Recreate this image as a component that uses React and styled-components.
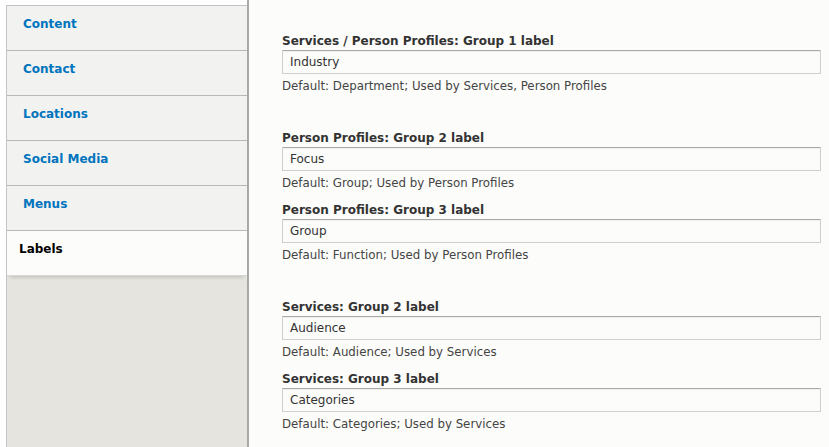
import React from "react";
import styled, { createGlobalStyle } from "styled-components";

const GlobalStyle = createGlobalStyle`
    html, body {
        margin: 0;
        padding: 0;
        background: #ffffff;
    }
    body {
        font-family: "DejaVu Sans", "Liberation Sans", sans-serif;
        font-size: 13px;
        color: #333;
    }
`;

const Layout = styled.div`
    display: flex;
    min-height: 447px;
    width: 829px;
    overflow: hidden;
`;

const Sidebar = styled.div`
    width: 241px;
    padding: 5px 0 0 6px;
    display: flex;
    flex-direction: column;
`;

const TabList = styled.ul`
    flex: 1;
    margin: 0;
    padding: 0;
    list-style: none;
    background: #e6e4df;
    border-top: 1px solid #c4c4c4;
    border-left: 1px solid #c4c4c4;
`;

const Tab = styled.li`
    height: 45px;
    box-sizing: border-box;
    padding: ${({ selected }) => (selected ? "10px 16px 0 12px" : "10px 16px 0 16px")};
    background: ${({ selected }) => (selected ? "#fcfcfa" : "#f2f2f0")};
    border-bottom: 1px solid ${({ selected }) => (selected ? "#d8d8d4" : "#b8b8b8")};
    box-shadow: ${({ selected }) => (selected ? "0 4px 4px -3px rgba(0, 0, 0, 0.18)" : "none")};
    position: relative;
    font-weight: bold;
    font-size: 12px;
    line-height: 16px;
    color: ${({ selected }) => (selected ? "#000" : "#0074bd")};
`;

const Panel = styled.div`
    flex: 1;
    background: #fcfcfa;
    border-left: 2px solid #a8a8a8;
    padding: 32px 8px 0 33px;
`;

const Group = styled.div`
    padding-bottom: 25px;
`;

const Item = styled.div`
    margin-bottom: 9px;
`;

const Label = styled.label`
    display: block;
    font-weight: bold;
    font-size: 12px;
    line-height: 18px;
    color: #333;
`;

const Input = styled.input`
    display: block;
    width: 100%;
    height: 24px;
    box-sizing: border-box;
    margin: 0;
    padding: 0 7px;
    font-family: inherit;
    font-size: 12px;
    color: #333;
    background: #fcfcfa;
    border: 1px solid #cfcfcf;
    border-top-color: #aaaaaa;
    border-radius: 1px;
    box-shadow: inset 0 1px 1px rgba(0, 0, 0, 0.06);
`;

const Description = styled.div`
    margin-top: 4px;
    font-size: 11.8px;
    line-height: 17px;
    color: #444;
`;

const tabs = ["Content", "Contact", "Locations", "Social Media", "Menus", "Labels"];

const groups = [
    [
        {
            label: "Services / Person Profiles: Group 1 label",
            value: "Industry",
            help: "Default: Department; Used by Services, Person Profiles",
        },
    ],
    [
        {
            label: "Person Profiles: Group 2 label",
            value: "Focus",
            help: "Default: Group; Used by Person Profiles",
        },
        {
            label: "Person Profiles: Group 3 label",
            value: "Group",
            help: "Default: Function; Used by Person Profiles",
        },
    ],
    [
        {
            label: "Services: Group 2 label",
            value: "Audience",
            help: "Default: Audience; Used by Services",
        },
        {
            label: "Services: Group 3 label",
            value: "Categories",
            help: "Default: Categories; Used by Services",
        },
    ],
];

export default () => (
    <Layout>
        <GlobalStyle />
        <Sidebar>
            <TabList>
                {tabs.map((name) => (
                    <Tab key={name} selected={name === "Labels"}>
                        {name}
                    </Tab>
                ))}
            </TabList>
        </Sidebar>

        <Panel>
            {groups.map((items, i) => (
                <Group key={i}>
                    {items.map((item) => (
                        <Item key={item.label}>
                            <Label>{item.label}</Label>
                            <Input defaultValue={item.value} />
                            <Description>{item.help}</Description>
                        </Item>
                    ))}
                </Group>
            ))}
        </Panel>
    </Layout>
);
